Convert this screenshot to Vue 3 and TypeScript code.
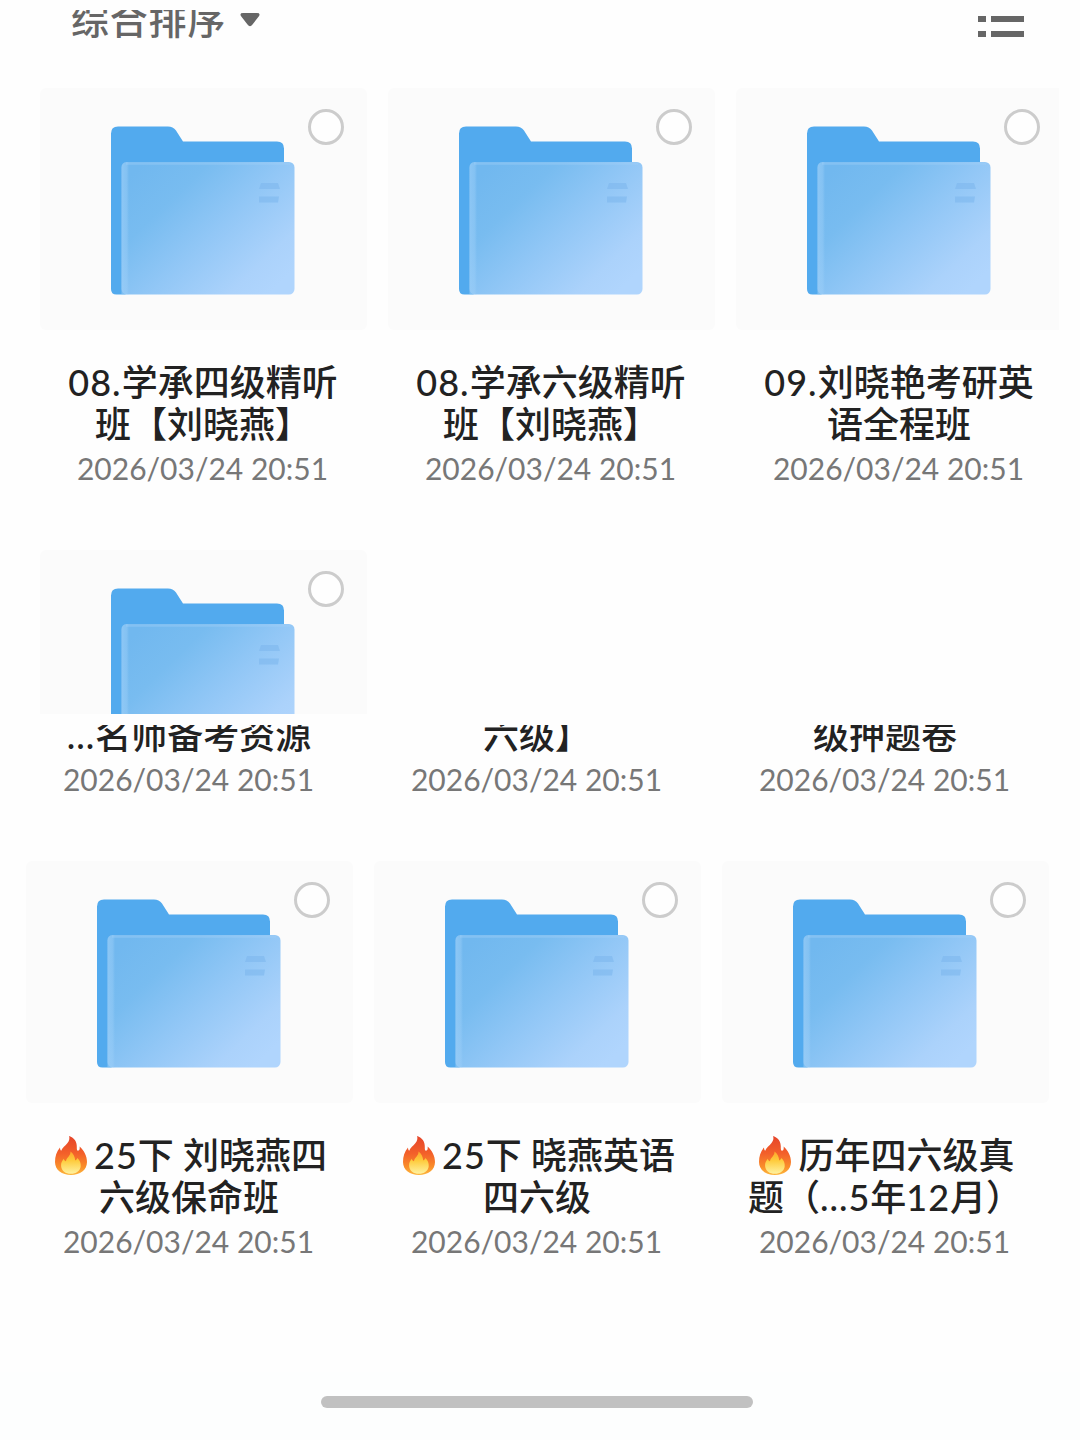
<script setup lang="ts">
interface TitleLine {
  text: string
  fire?: boolean
}

interface FolderItem {
  id: number
  lines: TitleLine[]
  time: string
}

interface Segment {
  text: string
  latin: boolean
}

const time = '2026/03/24 20:51'

const topRow: FolderItem[] = [
  { id: 1, lines: [{ text: '08.学承四级精听' }, { text: '班【刘晓燕】' }], time },
  { id: 2, lines: [{ text: '08.学承六级精听' }, { text: '班【刘晓燕】' }], time },
  { id: 3, lines: [{ text: '09.刘晓艳考研英' }, { text: '语全程班' }], time },
]

const clippedRow: FolderItem[] = [
  { id: 4, lines: [{ text: '...名师备考资源' }], time },
  { id: 5, lines: [{ text: '六级】' }], time },
  { id: 6, lines: [{ text: '级押题卷' }], time },
]

const bottomRow: FolderItem[] = [
  { id: 7, lines: [{ text: '25下 刘晓燕四', fire: true }, { text: '六级保命班' }], time },
  { id: 8, lines: [{ text: '25下 晓燕英语', fire: true }, { text: '四六级' }], time },
  { id: 9, lines: [{ text: '历年四六级真', fire: true }, { text: '题（...5年12月）' }], time },
]

// Digits and dots are tracked a little wider than the Chinese glyphs.
function segments(text: string): Segment[] {
  return (text.match(/[0-9.]+|[^0-9.]+/g) ?? []).map((part) => ({
    text: part,
    latin: /^[0-9.]/.test(part),
  }))
}
</script>

<template>
  <svg class="defs" width="0" height="0" aria-hidden="true">
    <defs>
      <linearGradient id="front" gradientUnits="userSpaceOnUse" x1="25" y1="45" x2="150" y2="175">
        <stop offset="0" stop-color="#71b8ef" />
        <stop offset="0.25" stop-color="#78bcf0" />
        <stop offset="0.55" stop-color="#92c7f6" />
        <stop offset="0.85" stop-color="#abd2fb" />
        <stop offset="1" stop-color="#b0d5fd" />
      </linearGradient>
      <linearGradient id="edge" x1="0" y1="0" x2="1" y2="0">
        <stop offset="0" stop-color="#9fd0f8" stop-opacity="0.6" />
        <stop offset="0.7" stop-color="#9fd0f8" stop-opacity="0.4" />
        <stop offset="1" stop-color="#9fd0f8" stop-opacity="0" />
      </linearGradient>
      <linearGradient id="flame" x1="0" y1="0" x2="0" y2="1">
        <stop offset="0" stop-color="#e5442a" />
        <stop offset="0.45" stop-color="#f3602a" />
        <stop offset="0.8" stop-color="#fa8f2a" />
        <stop offset="1" stop-color="#fdb83e" />
      </linearGradient>
      <linearGradient id="flame-core" x1="0" y1="0" x2="0" y2="1">
        <stop offset="0" stop-color="#fda52c" />
        <stop offset="0.4" stop-color="#fecb3c" />
        <stop offset="1" stop-color="#fff2a0" />
      </linearGradient>
      <symbol id="folder" viewBox="0 0 184 169">
        <path fill="#52aaee" d="M7 0.500H57Q62 0.500 65 4.500L72 15.500H166Q173 15.500 173 22.500V100L14 168.500H5.500Q0 168.500 0 163V7.500Q0 0.500 7 0.500Z" />
        <rect x="10.500" y="36" width="173" height="132.500" rx="5.500" fill="url(#front)" />
        <path fill="url(#edge)" d="M16 36H18V168.500H10.500V41.500Q10.500 36 16 36Z" />
        <path d="M15 37.500H179" stroke="#a3d0f7" stroke-width="2.500" stroke-opacity="0.4" />
        <path d="M150 57H167L169 63H148ZM148 70.500H168L167 76.500H148Z" fill="#7fb9ee" fill-opacity="0.65" />
      </symbol>
      <symbol id="fire" viewBox="0 0 32 39">
        <path fill="url(#flame)" d="M14 0C19.500 1.800 22 6 21.800 11C21.700 13 22 14.800 23 14.800C24.500 14.800 25 12.800 24.600 10.600C29 14.500 32 20 32 26C32 34 25 39 16 39C7 39 0 34 0 26C0 20.500 1.500 15.500 5 11.500C5 13 5.400 14.200 6.200 14.800C7 12 10.500 9.500 12.500 7C14.500 4.500 14.800 2 14 0Z" />
        <path fill="url(#flame-core)" d="M15.500 15.500C18.500 17.500 20 21 20.200 24.500C21.400 24 22 23.200 22.300 22C24.800 24 26 27 25.700 30.500C25.200 35 21 37.800 16 37.800C10.500 37.800 6.500 35 6.100 30C5.900 27 7 25 8.700 22.800C9.200 24.300 10 25 11 25.300C11.300 21.500 15.800 20 15.500 15.500Z" />
      </symbol>
    </defs>
  </svg>

  <main class="screen">
    <section class="pane pane-top">
      <header class="toolbar">
        <div class="sort">
          <span class="sort-label"><span>综合排序</span></span>
          <svg class="caret" width="20" height="15" viewBox="0 0 20 15">
            <path d="M3 0H17Q21 0 18.700 3.500L12.500 11.500Q10 15 7.500 11.500L1.300 3.500Q-1 0 3 0Z" fill="#666" />
          </svg>
        </div>
        <svg class="list-icon" width="46" height="21" viewBox="0 0 46 21">
          <path d="M0 0H8V6H0ZM13 0H46V6H13ZM0 15H8V21H0ZM13 15H46V21H13Z" fill="#666" />
        </svg>
      </header>

      <div class="row">
        <article v-for="item in topRow" :key="item.id" class="item">
          <div class="thumb">
            <svg class="folder"><use href="#folder" /></svg>
            <i class="check"></i>
          </div>
          <h2 class="title">
            <span v-for="line in item.lines" :key="line.text" class="line"><span v-for="(part, i) in segments(line.text)" :key="i" :class="{ latin: part.latin }">{{ part.text }}</span></span>
          </h2>
          <time class="time">{{ item.time }}</time>
        </article>
      </div>

      <div class="row">
        <article class="item">
          <div class="thumb">
            <svg class="folder"><use href="#folder" /></svg>
            <i class="check"></i>
          </div>
        </article>
      </div>
    </section>

    <section class="pane pane-bottom">
      <div class="row row-tail">
        <article v-for="item in clippedRow" :key="item.id" class="item">
          <h2 class="title title-tail">
            <span v-for="line in item.lines" :key="line.text" class="line"><span v-for="(part, i) in segments(line.text)" :key="i" :class="{ latin: part.latin }">{{ part.text }}</span></span>
          </h2>
          <time class="time">{{ item.time }}</time>
        </article>
      </div>

      <div class="row">
        <article v-for="item in bottomRow" :key="item.id" class="item">
          <div class="thumb">
            <svg class="folder"><use href="#folder" /></svg>
            <i class="check"></i>
          </div>
          <h2 class="title">
            <span v-for="line in item.lines" :key="line.text" class="line" :class="{ 'line-fire': line.fire }"><svg v-if="line.fire" class="fire"><use href="#fire" /></svg><span v-for="(part, i) in segments(line.text)" :key="i" :class="{ latin: part.latin }">{{ part.text }}</span></span>
          </h2>
          <time class="time">{{ item.time }}</time>
        </article>
      </div>
    </section>

    <footer class="nav"><i class="handle"></i></footer>
  </main>
</template>

<style>
body {
  background: #fefefe;
}
</style>

<style scoped>
.defs {
  position: absolute;
}
.screen {
  box-sizing: border-box;
  width: 1080px;
  height: 1440px;
  overflow: hidden;
  display: flex;
  flex-direction: column;
  background: #fefefe;
  color: #222;
  font-family: Lato, "Noto Sans CJK SC", sans-serif;
}
.pane {
  flex: none;
  box-sizing: border-box;
  overflow: hidden;
}
.pane-top {
  width: 1059px;
  height: 714px;
  padding-left: 40px;
}
.pane-bottom {
  height: 647px;
  margin-top: 11px;
  padding-left: 26px;
}
.toolbar {
  height: 88px;
  display: flex;
  justify-content: space-between;
  align-items: flex-start;
  padding: 10px 35px 0 31px;
  box-sizing: border-box;
}
.sort {
  display: flex;
  align-items: flex-start;
}
.sort-label {
  height: 32px;
  display: flex;
  align-items: flex-end;
  overflow: hidden;
  font-size: 38px;
  line-height: 46px;
  font-weight: 500;
  letter-spacing: 0.8px;
  color: #666;
}
.caret {
  margin: 3px 0 0 14px;
}
.list-icon {
  margin-top: 6px;
}
.row {
  display: flex;
  gap: 21px;
  height: 462px;
}
.row-tail {
  height: 136px;
}
.item {
  flex: none;
  width: 327px;
  display: flex;
  flex-direction: column;
  align-items: center;
}
.thumb {
  position: relative;
  width: 327px;
  height: 242px;
  border-radius: 6px;
  background: #fbfbfb;
  display: flex;
  justify-content: center;
}
.folder {
  width: 184px;
  height: 169px;
  margin: 38px 2px 0 0;
}
.check {
  position: absolute;
  top: 21px;
  right: 23px;
  box-sizing: border-box;
  width: 36px;
  height: 36px;
  border: 3px solid #ccc;
  border-radius: 50%;
  background: #fefefe;
}
.title {
  margin: 31px 1px 0 0;
  font-size: 36px;
  line-height: 42px;
  font-weight: 500;
  display: flex;
  flex-direction: column;
  align-items: center;
}
.title-tail {
  margin-top: 0;
  height: 31px;
  justify-content: flex-end;
  overflow: hidden;
}
.line {
  height: 42px;
  flex: none;
  display: flex;
  align-items: center;
  white-space: pre;
}
.line-fire {
  padding-left: 4px;
}
.latin {
  letter-spacing: 1px;
}
.fire {
  width: 32px;
  height: 39px;
  margin-right: 7px;
}
.time {
  margin: 2px 2px 0 0;
  font-size: 30px;
  line-height: 42px;
  color: #777;
}
.nav {
  flex: 1;
  display: flex;
  justify-content: center;
  padding: 24px 7px 0 0;
  background: #fdfefe;
}
.handle {
  width: 432px;
  height: 12px;
  border-radius: 6px;
  background: #c1c1c1;
}
</style>
